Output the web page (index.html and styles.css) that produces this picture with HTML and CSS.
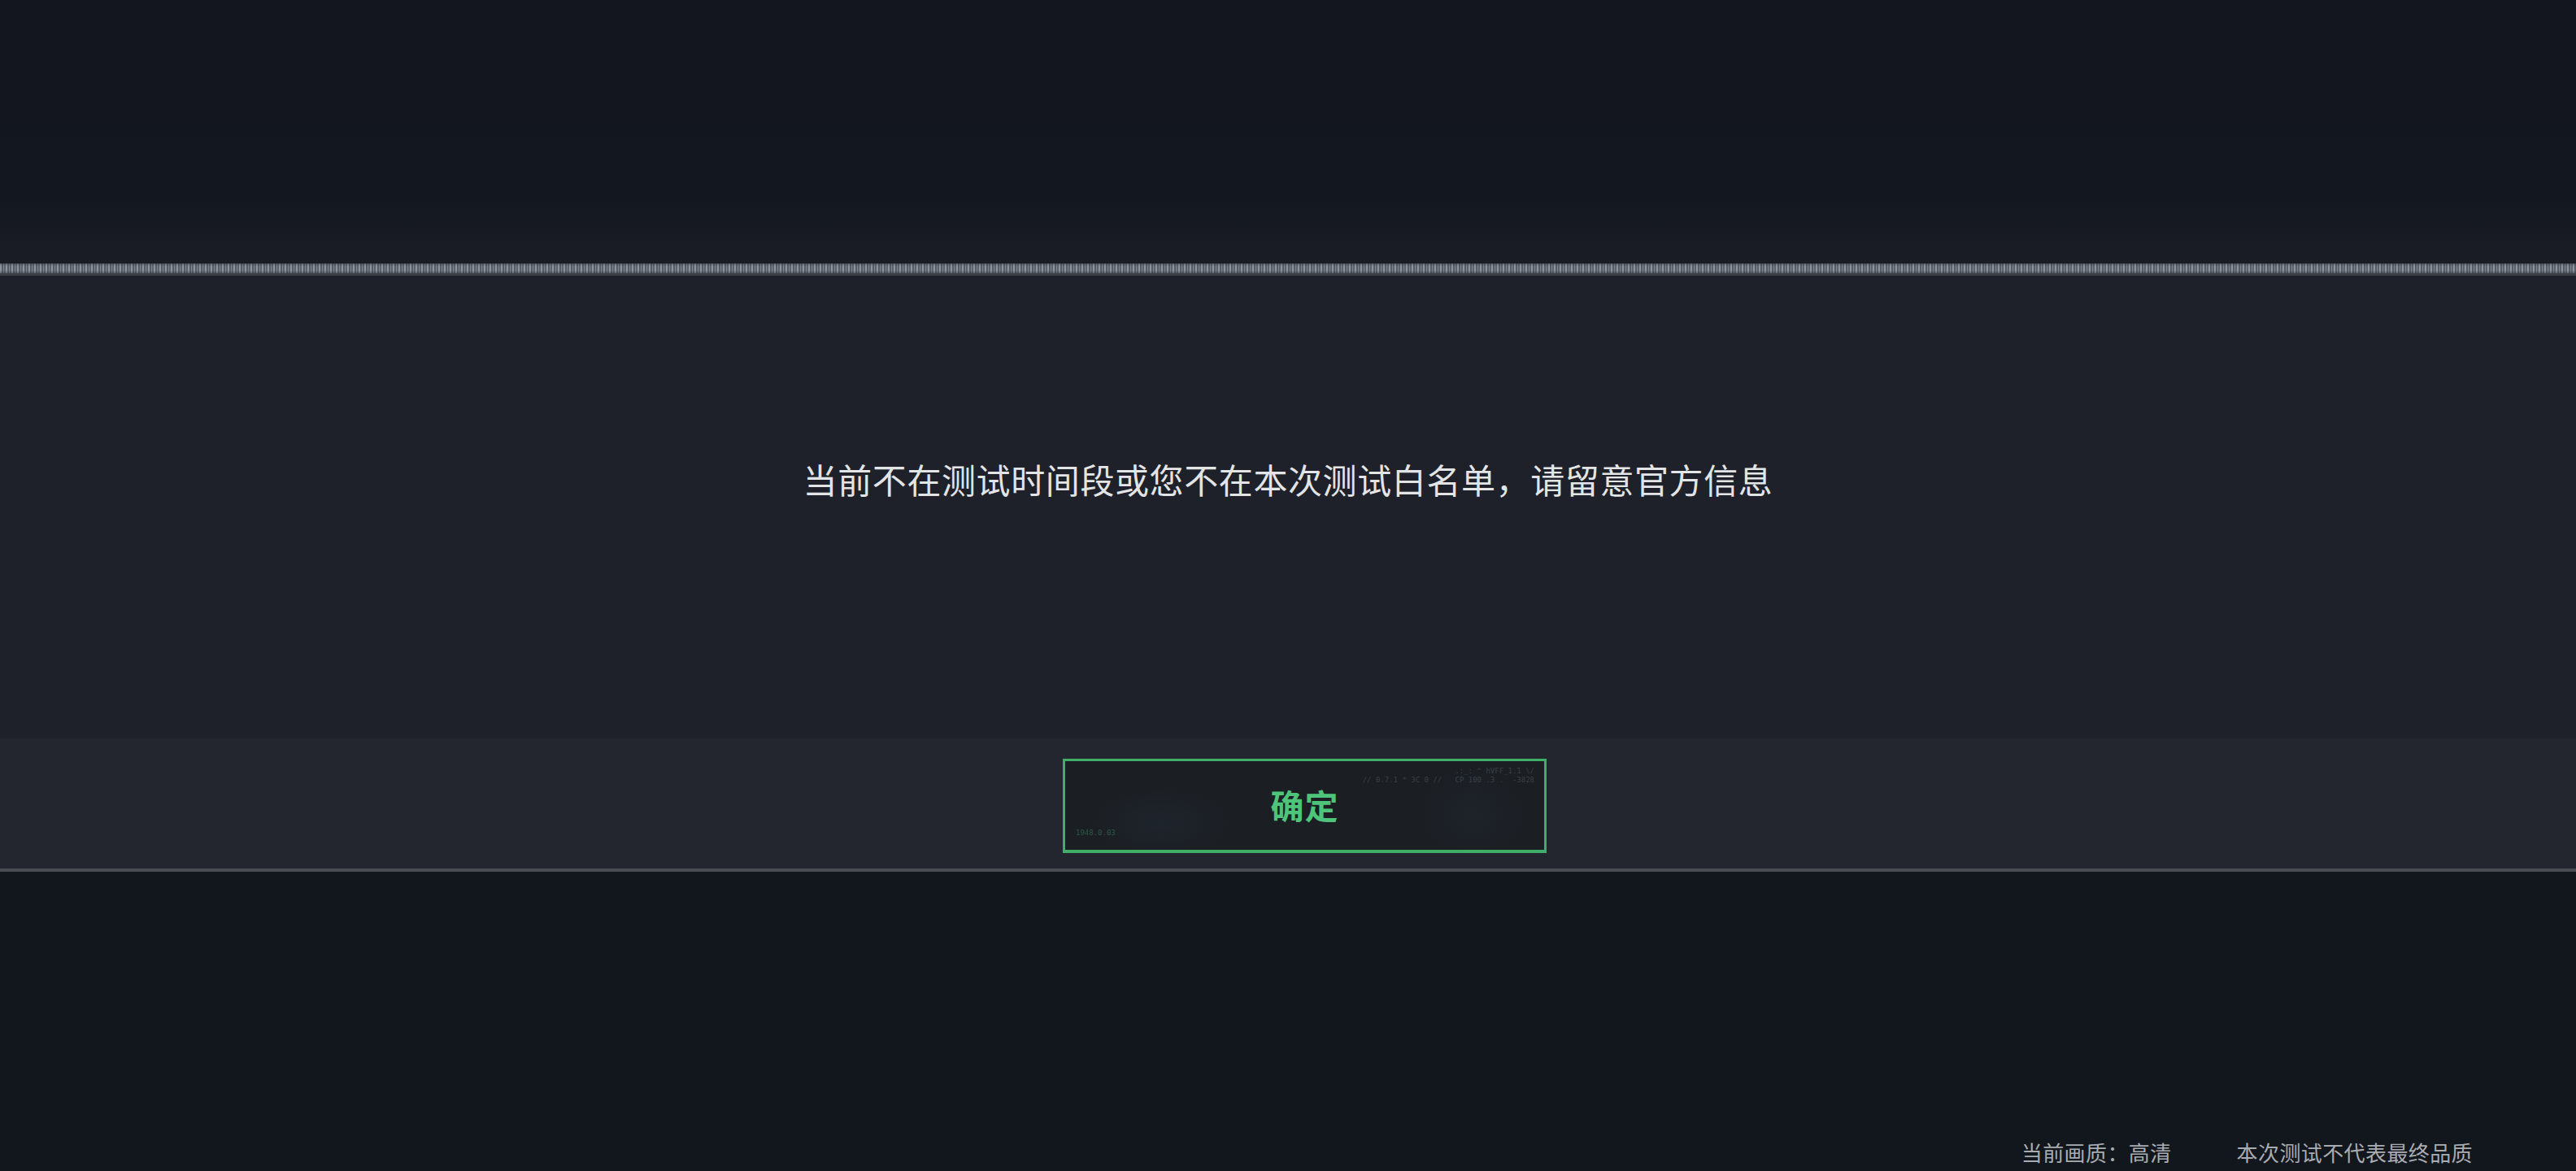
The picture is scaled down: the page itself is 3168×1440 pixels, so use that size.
FILE: index.html
```html
<!DOCTYPE html>
<html lang="zh-CN">
<head>
<meta charset="utf-8">
<title>提示</title>
<link rel="stylesheet" href="styles.css">
</head>
<body>
<div class="page">
  <div class="top-area"></div>
  <div class="ruler"></div>
  <div class="ruler-line"></div>
  <div class="dialog-body">
    <p class="message">当前不在测试时间段或您不在本次测试白名单，请留意官方信息</p>
  </div>
  <div class="dialog-bar">
    <button class="confirm-btn" type="button">
      <span class="deco deco-tr1">.:_:  ^ hVFF_1.1 \/</span>
      <span class="deco deco-tr2">// 0.7.1 * 3C 0 //&nbsp;&nbsp; CP 100 .3 .&nbsp; -3828</span>
      <span class="deco deco-bl">1948.0.03</span>
      <span class="btn-label">确定</span>
    </button>
  </div>
  <div class="bar-line"></div>
  <div class="bottom-area">
    <div class="footer">
      <span class="footer-item">当前画质：高清</span>
      <span class="footer-item">本次测试不代表最终品质</span>
    </div>
  </div>
</div>
</body>
</html>
```
FILE: styles.css
```css
* { box-sizing: border-box; }
html, body {
  margin: 0;
  padding: 0;
  background: #12161d;
}
body {
  font-family: "Noto Sans CJK SC", "Noto Sans", sans-serif;
}
.page {
  width: 3168px;
  height: 1440px;
  display: flex;
  flex-direction: column;
  overflow: hidden;
}
.top-area {
  height: 324px;
  flex: none;
  background: linear-gradient(180deg, #13161e 0%, #13171f 75%, #1a1d25 100%);
}
.ruler {
  height: 12px;
  flex: none;
  background:
    linear-gradient(180deg, rgba(20,24,30,0.35) 0%, rgba(0,0,0,0) 30%, rgba(0,0,0,0) 70%, rgba(20,24,30,0.35) 100%),
    repeating-linear-gradient(90deg, #8c939d 0 2px, #565d67 2px 4px, #7f8690 4px 5px, #5c636d 5px 7px);
}
.ruler-line {
  height: 3px;
  flex: none;
  background: #3c3f46;
}
.dialog-body {
  height: 569px;
  flex: none;
  background: #1e2129;
  display: flex;
  justify-content: center;
  padding-top: 220px;
}
.message {
  margin: 0;
  font-size: 42px;
  letter-spacing: 0.6px;
  line-height: 60px;
  color: #e3e4e6;
  font-weight: 400;
  white-space: nowrap;
}
.dialog-bar {
  height: 160px;
  flex: none;
  background: #23262e;
  display: flex;
  justify-content: center;
  padding-top: 25px;
  padding-left: 41px;
}
.confirm-btn {
  position: relative;
  width: 595px;
  height: 116px;
  margin: 0;
  padding: 0;
  border: 3px solid #3fae66;
  border-bottom-width: 4px;
  background:
    radial-gradient(ellipse 120px 60px at 20% 70%, rgba(60,80,110,0.10), rgba(0,0,0,0) 70%),
    radial-gradient(ellipse 90px 80px at 85% 60%, rgba(60,80,110,0.08), rgba(0,0,0,0) 70%),
    #1b1f24;
  display: flex;
  align-items: center;
  justify-content: center;
  font-family: "Noto Sans CJK SC", "Noto Sans", sans-serif;
  cursor: pointer;
}
.btn-label {
  font-size: 41px;
  font-weight: 700;
  color: #4ec47b;
  letter-spacing: 1px;
  line-height: 1;
  margin-top: -2px;
}
.deco {
  position: absolute;
  font-family: "DejaVu Sans Mono", monospace;
  font-size: 9px;
  line-height: 1;
  white-space: nowrap;
}
.deco-tr1 {
  top: 8px;
  right: 12px;
  color: rgba(120, 130, 140, 0.35);
}
.deco-tr2 {
  top: 19px;
  right: 12px;
  color: rgba(120, 130, 140, 0.35);
}
.deco-bl {
  left: 13px;
  bottom: 16px;
  color: rgba(78, 196, 123, 0.35);
}
.bar-line {
  height: 4px;
  flex: none;
  background: #4a4d53;
}
.bottom-area {
  flex: 1;
  background: #12161d;
  display: flex;
  flex-direction: column;
  justify-content: flex-end;
  align-items: flex-end;
}
.footer {
  display: flex;
  gap: 80px;
  padding-right: 127px;
  padding-bottom: 10px;
}
.footer-item {
  font-size: 26px;
  line-height: 26px;
  letter-spacing: 0.4px;
  color: #a8acb1;
}
```
